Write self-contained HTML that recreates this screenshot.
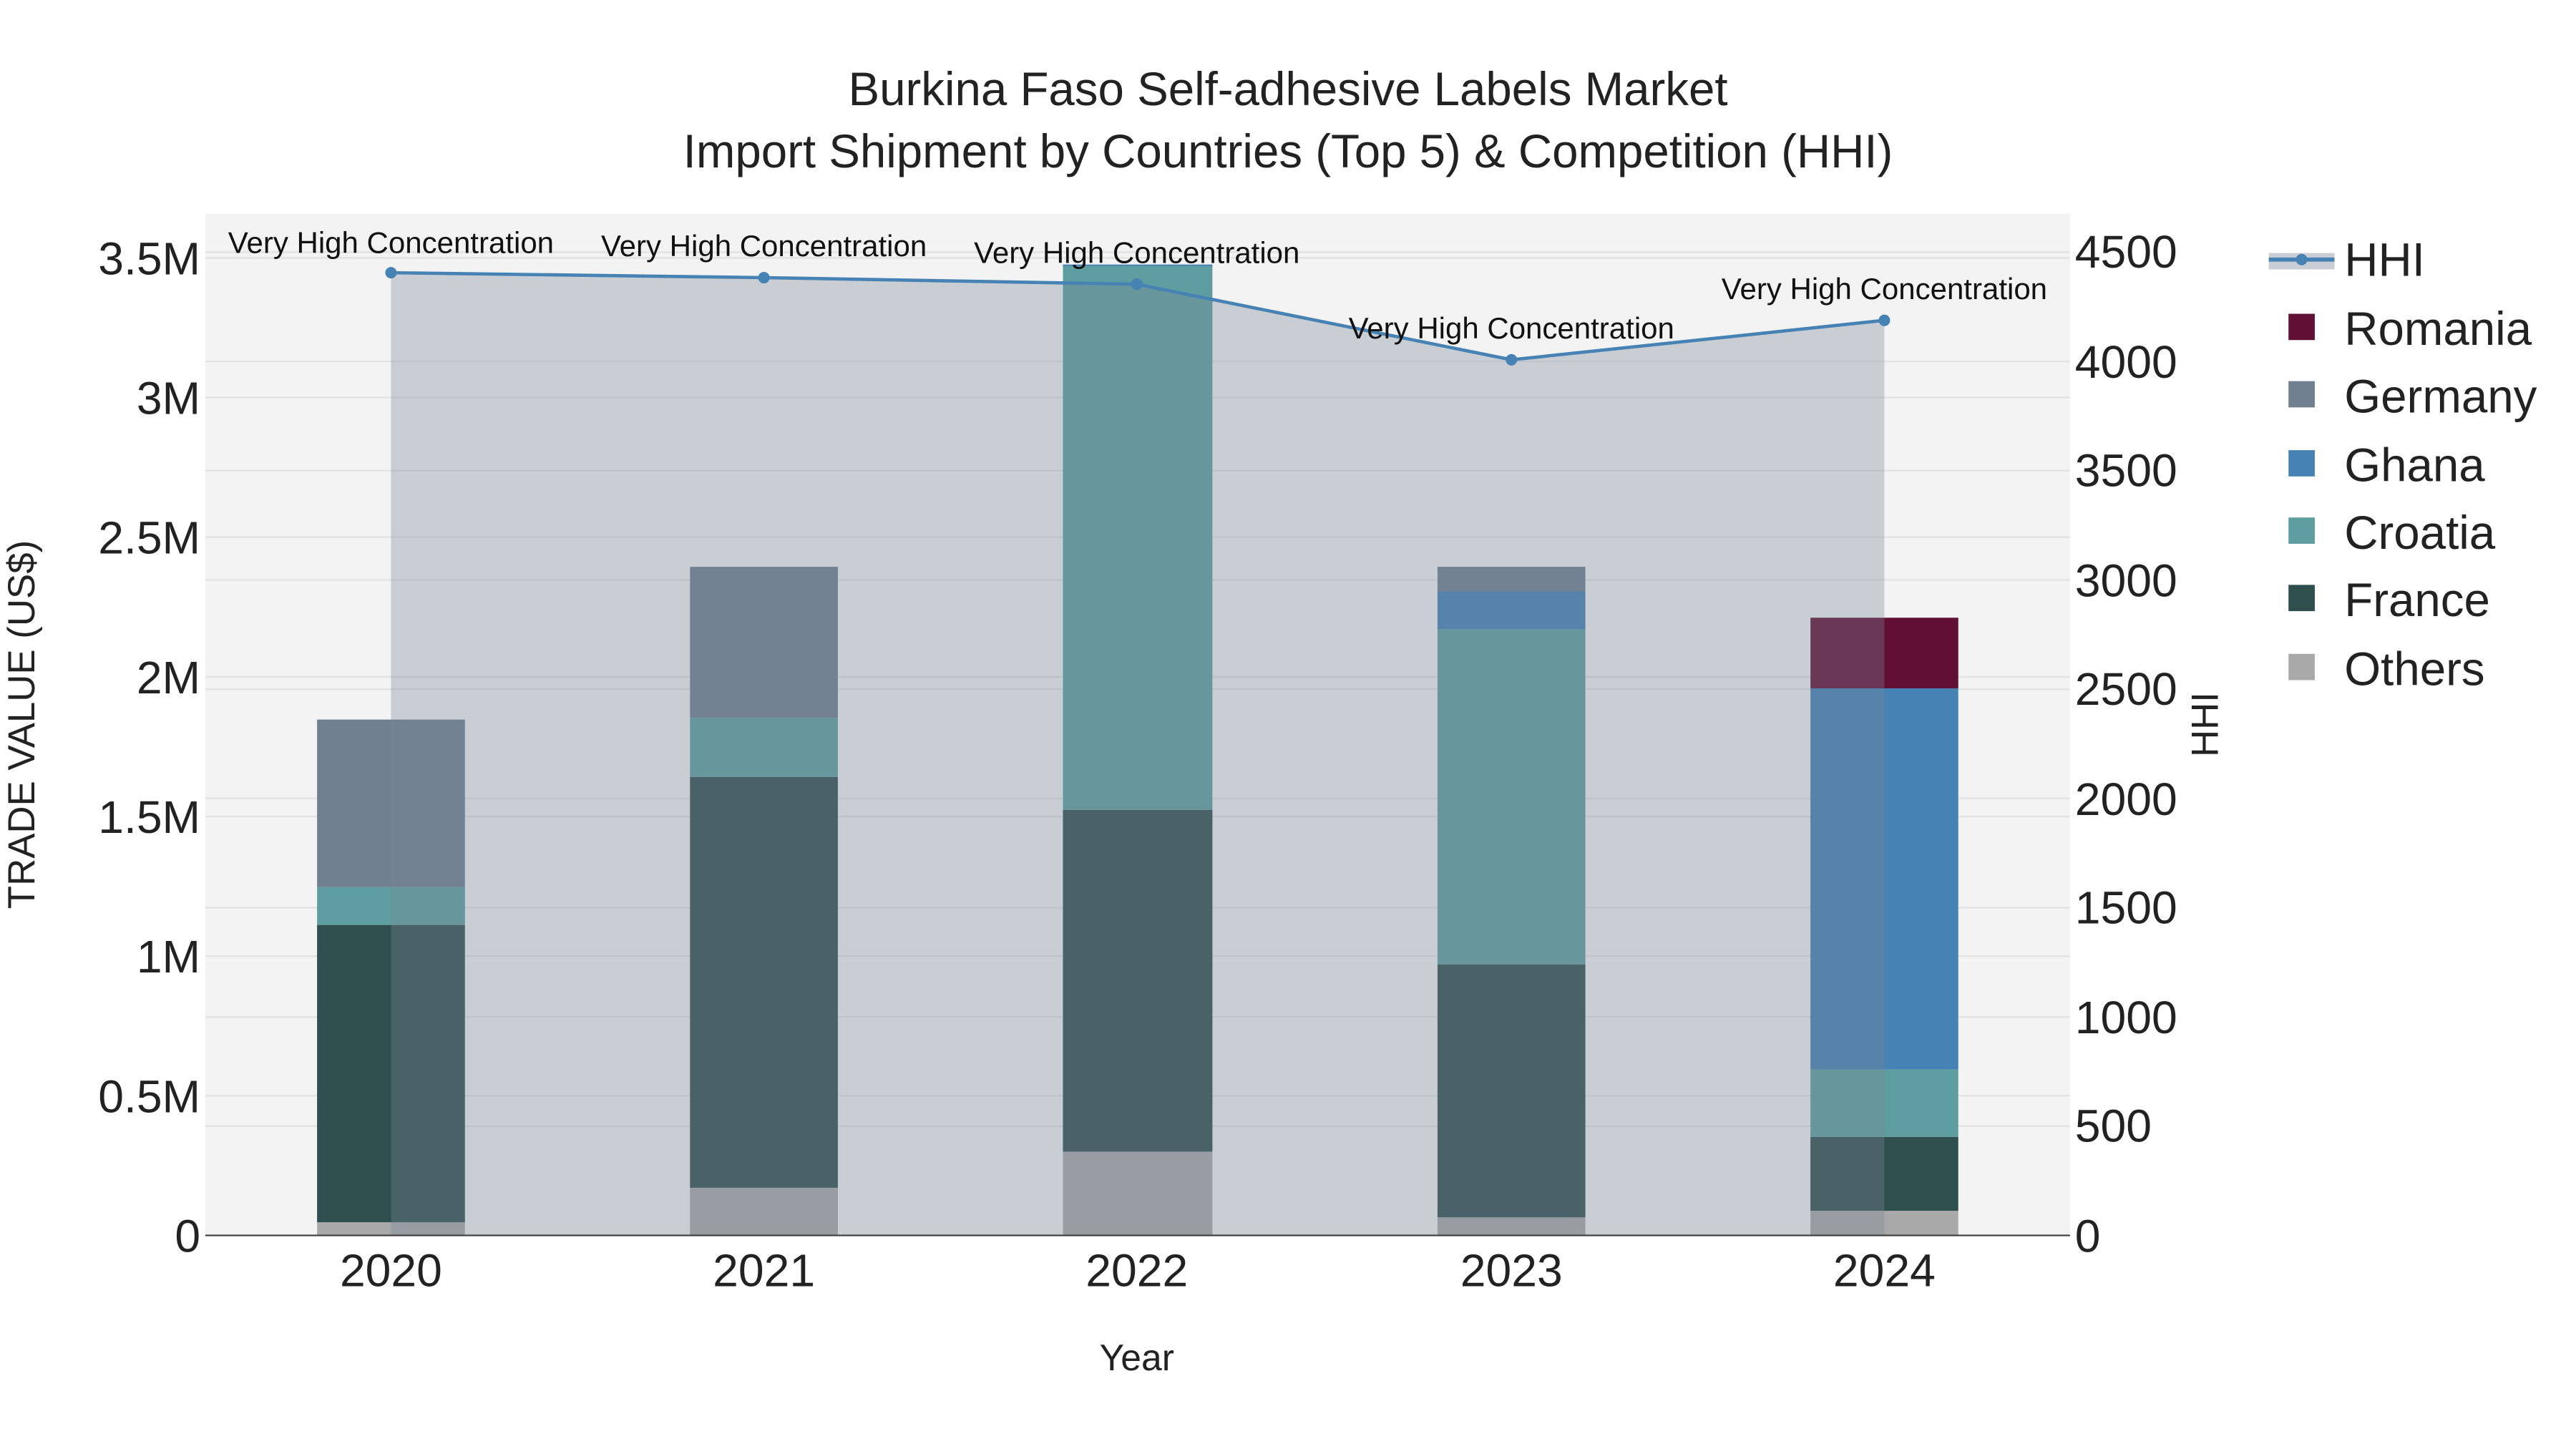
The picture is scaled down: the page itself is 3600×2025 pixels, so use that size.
<!DOCTYPE html>
<html><head><meta charset="utf-8"><style>html,body{margin:0;padding:0;background:#fff}svg{display:block}</style></head>
<body>
<svg width="3600" height="2025" viewBox="0 0 1568 882" xmlns="http://www.w3.org/2000/svg" font-family="Liberation Sans, sans-serif">
<rect width="1568" height="882" fill="#fff"/>
<rect x="125" y="130" width="1135" height="622" fill="#f3f3f3"/>
<g stroke="#e2e2e2" stroke-width="1">
<line x1="125" x2="1260" y1="667" y2="667"/><line x1="125" x2="1260" y1="582" y2="582"/><line x1="125" x2="1260" y1="497" y2="497"/><line x1="125" x2="1260" y1="412" y2="412"/><line x1="125" x2="1260" y1="327" y2="327"/><line x1="125" x2="1260" y1="242" y2="242"/><line x1="125" x2="1260" y1="157" y2="157"/>
<line x1="125" x2="1260" y1="685.5" y2="685.5"/><line x1="125" x2="1260" y1="619" y2="619"/><line x1="125" x2="1260" y1="552.5" y2="552.5"/><line x1="125" x2="1260" y1="486" y2="486"/><line x1="125" x2="1260" y1="419.5" y2="419.5"/><line x1="125" x2="1260" y1="353" y2="353"/><line x1="125" x2="1260" y1="286.5" y2="286.5"/><line x1="125" x2="1260" y1="220" y2="220"/><line x1="125" x2="1260" y1="153.5" y2="153.5"/>
</g>
<g>
<rect x="193" y="744" width="90" height="8" fill="#a9a9a9"/><rect x="193" y="563" width="90" height="181" fill="#2f4f4f"/><rect x="193" y="540" width="90" height="23" fill="#5f9ea0"/><rect x="193" y="438" width="90" height="102" fill="#708090"/>
<rect x="420" y="723" width="90" height="29" fill="#a9a9a9"/><rect x="420" y="473" width="90" height="250" fill="#2f4f4f"/><rect x="420" y="437" width="90" height="36" fill="#5f9ea0"/><rect x="420" y="345" width="90" height="92" fill="#708090"/>
<rect x="647" y="701" width="91" height="51" fill="#a9a9a9"/><rect x="647" y="493" width="91" height="208" fill="#2f4f4f"/><rect x="647" y="162" width="91" height="331" fill="#5f9ea0"/><rect x="647" y="161" width="91" height="1" fill="#4682b4"/>
<rect x="875" y="741" width="90" height="11" fill="#a9a9a9"/><rect x="875" y="587" width="90" height="154" fill="#2f4f4f"/><rect x="875" y="383" width="90" height="204" fill="#5f9ea0"/><rect x="875" y="360" width="90" height="23" fill="#4682b4"/><rect x="875" y="345" width="90" height="15" fill="#708090"/>
<rect x="1102" y="737" width="90" height="15" fill="#a9a9a9"/><rect x="1102" y="692" width="90" height="45" fill="#2f4f4f"/><rect x="1102" y="651" width="90" height="41" fill="#5f9ea0"/><rect x="1102" y="419" width="90" height="232" fill="#4682b4"/><rect x="1102" y="376" width="90" height="43" fill="#601035"/>
</g>
<polygon points="238,166 465,169 692,173 920,219 1147,195 1147,752 238,752" fill="rgb(119,136,153)" fill-opacity="0.34"/>
<line x1="125" x2="1260" y1="752" y2="752" stroke="#444" stroke-width="1"/>
<polyline points="238,166 465,169 692,173 920,219 1147,195" fill="none" stroke="#4682b4" stroke-width="2"/>
<g fill="#4682b4"><circle cx="238" cy="166" r="3.5"/><circle cx="465" cy="169" r="3.5"/><circle cx="692" cy="173" r="3.5"/><circle cx="920" cy="219" r="3.5"/><circle cx="1147" cy="195" r="3.5"/></g>
<g font-size="18.3" fill="#111" text-anchor="middle">
<text x="238" y="154">Very High Concentration</text><text x="465" y="156">Very High Concentration</text><text x="692" y="160">Very High Concentration</text><text x="920" y="206">Very High Concentration</text><text x="1147" y="182">Very High Concentration</text>
</g>
<g font-size="28.5" fill="#222" text-anchor="middle">
<text x="784" y="64">Burkina Faso Self-adhesive Labels Market</text>
<text x="784" y="102">Import Shipment by Countries (Top 5) &amp; Competition (HHI)</text>
</g>
<g font-size="28" fill="#222" text-anchor="end">
<text x="122" y="762">0</text><text x="122" y="677">0.5M</text><text x="122" y="592">1M</text><text x="122" y="507">1.5M</text><text x="122" y="422">2M</text><text x="122" y="337">2.5M</text><text x="122" y="252">3M</text><text x="122" y="167">3.5M</text>
</g>
<g font-size="28" fill="#222" text-anchor="start">
<text x="1263" y="762">0</text><text x="1263" y="695">500</text><text x="1263" y="629">1000</text><text x="1263" y="562">1500</text><text x="1263" y="496">2000</text><text x="1263" y="429">2500</text><text x="1263" y="363">3000</text><text x="1263" y="296">3500</text><text x="1263" y="230">4000</text><text x="1263" y="163">4500</text>
</g>
<g font-size="28" fill="#222" text-anchor="middle">
<text x="238" y="783">2020</text><text x="465" y="783">2021</text><text x="692" y="783">2022</text><text x="920" y="783">2023</text><text x="1147" y="783">2024</text>
</g>
<text x="692" y="834" font-size="22.5" fill="#222" text-anchor="middle">Year</text>
<text transform="translate(21,441) rotate(-90)" font-size="23" fill="#222" text-anchor="middle">TRADE VALUE (US$)</text>
<text transform="translate(1350,441) rotate(-90)" font-size="23" fill="#222" text-anchor="middle">HHI</text>
<g>
<rect x="1381" y="154" width="40" height="10" fill="#c9ced6"/><line x1="1381" x2="1421" y1="158" y2="158" stroke="#4682b4" stroke-width="2.5"/><circle cx="1401" cy="158" r="3.5" fill="#4682b4"/>
<rect x="1393" y="191" width="16" height="16" fill="#601035"/>
<rect x="1393" y="232" width="16" height="16" fill="#708090"/>
<rect x="1393" y="274" width="16" height="16" fill="#4682b4"/>
<rect x="1393" y="315" width="16" height="16" fill="#5f9ea0"/>
<rect x="1393" y="356" width="16" height="16" fill="#2f4f4f"/>
<rect x="1393" y="398" width="16" height="16" fill="#a9a9a9"/>
</g>
<g font-size="28.5" fill="#222">
<text x="1427" y="168">HHI</text><text x="1427" y="210">Romania</text><text x="1427" y="251">Germany</text><text x="1427" y="293">Ghana</text><text x="1427" y="334">Croatia</text><text x="1427" y="375">France</text><text x="1427" y="417">Others</text>
</g>
</svg>
</body></html>
